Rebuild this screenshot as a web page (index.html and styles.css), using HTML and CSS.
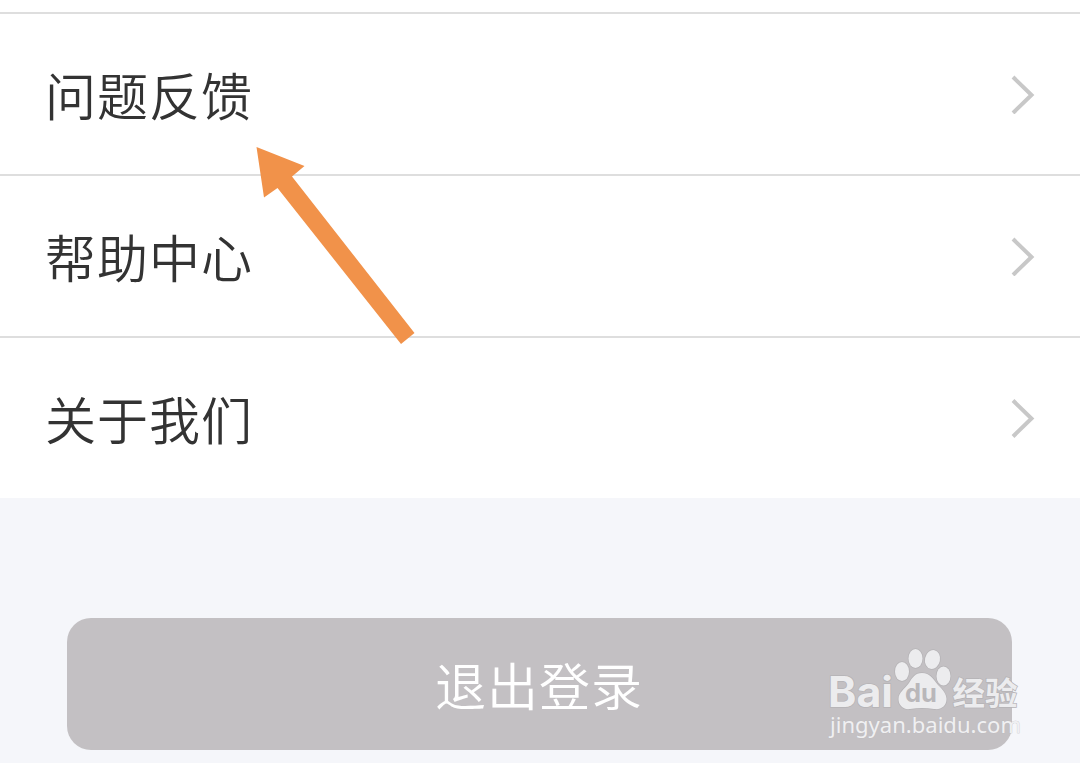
FILE: index.html
```html
<!DOCTYPE html>
<html lang="zh-CN">
    <head>
        <meta charset="UTF-8">
        <meta name="viewport" content="width=device-width, initial-scale=1.0">
        <title>设置</title>
        <link rel="stylesheet" href="styles.css">
    </head>
    <body>
        <div class="menu">
            <div class="menuItem">
                <span class="label">问题反馈</span>
                <svg class="chevron" viewBox="0 0 24 40"><path d="M2 3 L20.5 21 L2 39"/></svg>
            </div>
            <div class="menuItem">
                <span class="label">帮助中心</span>
                <svg class="chevron" viewBox="0 0 24 40"><path d="M2 3 L20.5 21 L2 39"/></svg>
            </div>
            <div class="menuItem">
                <span class="label">关于我们</span>
                <svg class="chevron" viewBox="0 0 24 40"><path d="M2 2.500 L20.5 20.500 L2 38.500"/></svg>
            </div>
        </div>
        <button type="button" class="logout">退出登录</button>

        <svg class="arrow" viewBox="0 0 160 200">
            <polygon points="0.500,1 48.500,20 36,30.5 158.500,187 145,198 21.500,42 8,51.500"/>
        </svg>

        <svg class="watermark" viewBox="0 0 210 100">
            <g class="mark">
                <text class="bai" x="8" y="62" textLength="65" lengthAdjust="spacingAndGlyphs">Bai</text>
                <ellipse cx="82" cy="26.500" rx="7" ry="9.500"/>
                <ellipse cx="95.500" cy="13.500" rx="7" ry="9.500"/>
                <ellipse cx="112.500" cy="14.500" rx="7.500" ry="9.500" transform="rotate(12 112.500 14.500)"/>
                <ellipse cx="123.500" cy="31" rx="7" ry="9.500"/>
                <path d="M102 28 C110 28 113 34 118 40 C123 45 126.500 49 126.500 54 C126.500 61 121 65 114 64 C106 62.500 98 62.500 90 64 C83 65 78.500 60 78.500 54 C78.500 47 85 44 89 38 C92 33 95 28 102 28 Z"/>
                <text class="jy" x="132.500" y="59.500" textLength="65" lengthAdjust="spacingAndGlyphs">经验</text>
            </g>
            <text class="du" x="85" y="57" textLength="32" lengthAdjust="spacingAndGlyphs">du</text>
            <text class="url" x="10" y="88" textLength="191" lengthAdjust="spacingAndGlyphs">jingyan.baidu.com</text>
        </svg>
    </body>
</html>
```

FILE: styles.css
```css
* {
    box-sizing: border-box;
}
body {
    margin: 0;
    height: 763px;
    position: relative;
    overflow: hidden;
    background-color: #f5f6fa;
    font-family: "Noto Sans CJK SC", sans-serif;
}
.menu {
    padding-top: 12px;
    background-color: #fff;
}
.menuItem {
    display: flex;
    align-items: center;
    justify-content: space-between;
    height: 162px;
    padding: 0 45px 0 45px;
    border-top: 2px solid #dedede;
}
.label {
    font-size: 51px;
    font-weight: 350;
    line-height: 72px;
    letter-spacing: 1px;
    color: #333;
}
.chevron {
    width: 24px;
    height: 40px;
    fill: none;
    stroke: #c8c8c8;
    stroke-width: 4;
}
.logout {
    display: block;
    width: 945px;
    height: 132px;
    margin: 120px 0 0 67px;
    padding: 0 1px 0 0;
    border: none;
    border-radius: 24px;
    background-color: #c3c0c3;
    color: #fff;
    font-family: inherit;
    font-size: 51px;
    font-weight: 350;
    letter-spacing: 1px;
}
.arrow {
    position: absolute;
    left: 256px;
    top: 146px;
    width: 160px;
    height: 200px;
    fill: #f1924a;
}
.watermark {
    position: absolute;
    left: 820px;
    top: 645px;
    width: 210px;
    height: 100px;
}
.mark {
    fill: #ececee;
    stroke: #b5b3b6;
    stroke-width: 1.500px;
    paint-order: stroke;
}
.bai {
    font: bold 42px Inter, sans-serif;
}
.jy {
    font: bold 32px "Noto Sans CJK SC", sans-serif;
}
.du {
    font: bold 25px Inter, sans-serif;
    fill: #b9b7ba;
}
.url {
    font: 22px "Noto Sans", sans-serif;
    fill: #f0f0f2;
    stroke: #bcbabd;
    stroke-width: 0.500px;
    paint-order: stroke;
}
```
